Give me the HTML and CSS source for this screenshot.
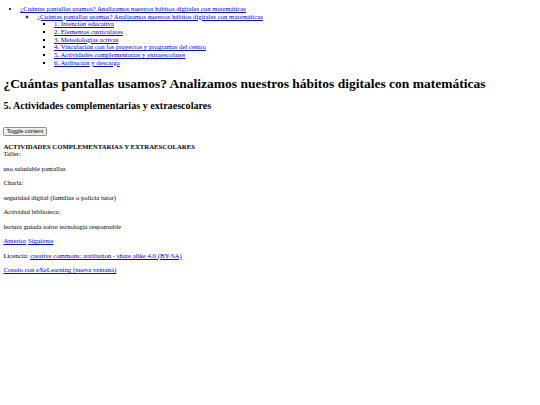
FILE: index.html
```html
<!DOCTYPE html>
<html lang="es">
<head>
<meta charset="utf-8">
<title>5. Actividades complementarias y extraescolares</title>
<link rel="stylesheet" href="styles.css">
</head>
<body class="page">
<nav class="site-nav">
<ul class="nav-list">
<li><a href="#">¿Cuántas pantallas usamos? Analizamos nuestros hábitos digitales con matemáticas</a>
<ul>
<li><a href="#">¿Cuántas pantallas usamos? Analizamos nuestros hábitos digitales con matemáticas</a>
<ul>
<li><a href="#">1. Intención educativa</a></li>
<li><a href="#">2. Elementos curriculares</a></li>
<li><a href="#">3. Metodologías activas</a></li>
<li><a href="#">4. Vinculación con los proyectos y programas del centro</a></li>
<li><a href="#">5. Actividades complementarias y extraescolares</a></li>
<li><a href="#">6. Atribución y descarga</a></li>
</ul>
</li>
</ul>
</li>
</ul>
</nav>
<main class="main">
<header class="page-header">
<h1 class="package-title">¿Cuántas pantallas usamos? Analizamos nuestros hábitos digitales con matemáticas</h1>
<h2 class="page-title">5. Actividades complementarias y extraescolares</h2>
</header>
<div class="toggle-wrap"><button class="toggle-btn" type="button">Toggle content</button></div>
<article class="box">
<header class="box-head"><strong class="box-title">ACTIVIDADES COMPLEMENTARIAS Y EXTRAESCOLARES</strong></header>
<div class="box-content">
Taller:
<p>uso saludable pantallas</p>
<p>Charla:</p>
<p>seguridad digital (familias o policía tutor)</p>
<p>Actividad biblioteca:</p>
<p>lectura guiada sobre tecnología responsable</p>
</div>
</article>
<p class="pager"><a href="#">Anterior</a> <a href="#">Siguiente</a></p>
</main>
<footer class="footer">
<p>Licencia: <a href="#">creative commons: attribution - share alike 4.0 (BY-SA)</a></p>
<p><a href="#">Creado con eXeLearning (nueva ventana)</a></p>
</footer>
</body>
</html>
```
FILE: styles.css
```css
html {
  font-size: 6.75px;
  background: #fff;
}
.page {
  margin: 3.375px;
  font-family: "Liberation Serif", "Times New Roman", serif;
  font-size: 6.75px;
  line-height: 1.14;
  color: #000;
}
.page a {
  color: #0000ee;
}
.site-nav ul {
  padding-left: 16.875px;
}
.nav-list {
  margin: 1.6px 0 6.75px;
}
.toggle-wrap {
  margin: 16px 0 6.75px;
}
.toggle-btn {
  display: block;
  font-family: "Liberation Sans", Arial, sans-serif;
  font-size: 5.625px;
  line-height: 5.4px;
  padding: 0.6px 2.4px;
  color: #000;
  background: #efefef;
  border: 1px solid #8f8f8f;
  border-radius: 1.2px;
}
.box-title {
  display: block;
}
```
